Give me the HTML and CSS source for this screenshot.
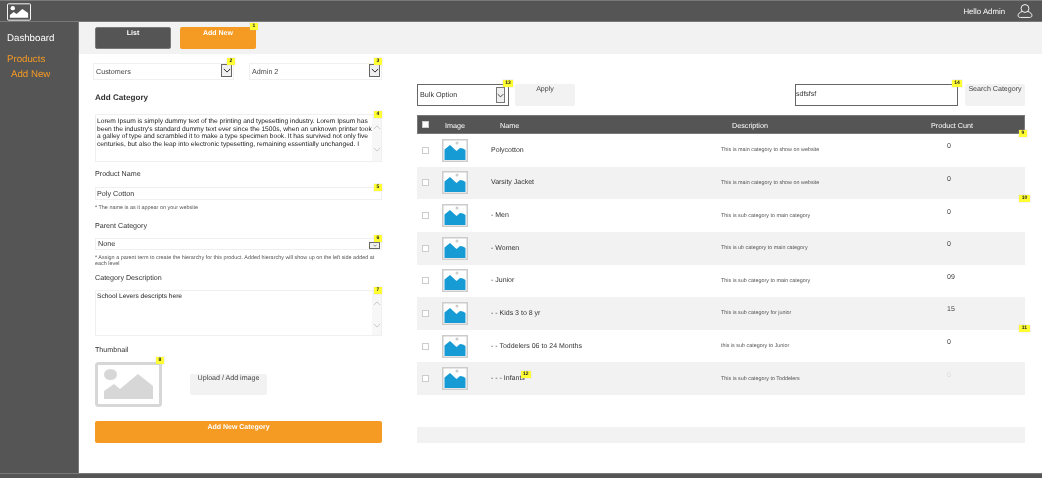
FILE: index.html
```html
<!DOCTYPE html>
<html lang="en">
<head>
    <meta charset="UTF-8">
    <title>Add Category</title>
    <link rel="stylesheet" href="styles.css">
</head>
<body>

    <!-- shared pictures -->
    <svg class="defs" width="0" height="0">
        <symbol id="thumb" viewBox="0 0 26 23">
            <rect x="0.75" y="0.75" width="24.5" height="21.5" fill="#fff" stroke="#ccc" stroke-width="1.5"/>
            <circle cx="15" cy="4" r="1.5" fill="#ccc"/>
            <path d="M2.5 21V10.5L8 6L14.5 12L18 9L21 9.5L23.5 11V21Z" fill="#169bd5"/>
        </symbol>
        <symbol id="chev" viewBox="0 0 10 6">
            <path d="M1 1L5 5L9 1" fill="none" stroke="currentColor" stroke-width="1.2"/>
        </symbol>
    </svg>

    <div class="page">

        <!-- Header -->
        <header class="topbar">
            <svg class="logo" viewBox="0 0 25 18">
                <rect x="0.5" y="0.5" width="24" height="17" rx="1" fill="none" stroke="#fff"/>
                <circle cx="6" cy="5" r="2.3" fill="#fff"/>
                <path d="M3 15V12L7 9L10 11L16 6L22 10V15Z" fill="#fff"/>
            </svg>
            <span class="hello">Hello Admin</span>
            <svg class="user" viewBox="0 0 16 15">
                <ellipse cx="8" cy="4.8" rx="4.2" ry="4.2" fill="none" stroke="#fff"/>
                <path d="M5 8C2 9 .6 10.5 .6 12.3C.6 13.6 1.4 14.4 3 14.4H13C14.6 14.4 15.4 13.6 15.4 12.3C15.4 10.5 14 9 11 8" fill="none" stroke="#fff"/>
            </svg>
        </header>

        <!-- Sidebar -->
        <nav class="sidebar">
            <a class="nav-link">Dashboard</a>
            <a class="nav-link nav-active">Products</a>
            <a class="nav-link nav-active nav-sub">Add New</a>
        </nav>

        <main class="content">

            <div class="subbar">
                <button class="tab tab-dark">List</button>
                <button class="tab tab-orange">Add New<span class="badge badge-1">1</span></button>
            </div>

            <div class="columns">

                <!-- Add category form -->
                <section class="form">
                    <div class="select-row">
                        <div class="field select-top">Customers
                            <span class="drop"><svg><use href="#chev"/></svg></span>
                            <span class="badge badge-2">2</span>
                        </div>
                        <div class="field select-top select-admin">Admin 2
                            <span class="drop"><svg><use href="#chev"/></svg></span>
                            <span class="badge badge-edge badge-3">3</span>
                        </div>
                    </div>

                    <h3 class="form-title">Add Category</h3>

                    <div class="field area area-lorem">
                        <p>Lorem Ipsum is simply dummy text of the printing and typesetting industry. Lorem Ipsum has been the industry's standard dummy text ever since the 1500s, when an unknown printer took a galley of type and scrambled it to make a type specimen book. It has survived not only five centuries, but also the leap into electronic typesetting, remaining essentially unchanged. I</p>
                        <div class="scroll">
                            <svg class="up"><use href="#chev"/></svg>
                            <svg><use href="#chev"/></svg>
                        </div>
                        <span class="badge badge-edge">4</span>
                    </div>

                    <label class="label label-name">Product Name</label>
                    <div class="field input">Poly Cotton<span class="badge badge-edge">5</span></div>
                    <p class="hint">* The name is as it appear on your website</p>

                    <label class="label label-parent">Parent Category</label>
                    <div class="field input input-parent">None
                        <span class="drop drop-small"><svg><use href="#chev"/></svg></span>
                        <span class="badge badge-edge">6</span>
                    </div>
                    <p class="hint">* Assign a parent term to create the hierarchy for this product. Added hierarchy will show up on the left side added at each level</p>

                    <label class="label label-desc">Category Description</label>
                    <div class="field area area-desc">
                        <p>School Levers descripts here</p>
                        <div class="scroll">
                            <svg class="up"><use href="#chev"/></svg>
                            <svg><use href="#chev"/></svg>
                        </div>
                        <span class="badge badge-edge">7</span>
                    </div>

                    <label class="label label-thumb">Thumbnail</label>
                    <div class="thumb-row">
                        <div class="thumb-box">
                            <svg viewBox="0 0 67 45">
                                <rect x="1.5" y="1.5" width="64" height="42" rx="2" fill="#fff" stroke="#d7d7d7" stroke-width="3"/>
                                <ellipse cx="15.5" cy="12.5" rx="6.5" ry="5.5" fill="#d7d7d7"/>
                                <path d="M9 37V29L19 22L25 27L43 12L58 24V37Z" fill="#d7d7d7"/>
                            </svg>
                            <span class="badge badge-8">8</span>
                        </div>
                        <button class="grey-btn upload">Upload / Add image</button>
                    </div>

                    <button class="submit">Add New Category</button>
                </section>

                <!-- Category list -->
                <section class="list">
                    <div class="toolbar">
                        <div class="field bulk">Bulk Option
                            <span class="drop drop-bulk"><svg><use href="#chev"/></svg></span>
                            <span class="badge badge-13">13</span>
                        </div>
                        <button class="grey-btn apply">Apply</button>
                        <div class="field search">sdfsfsf<span class="badge badge-13">14</span></div>
                        <button class="grey-btn find">Search Category</button>
                    </div>

                    <div class="table">
                        <div class="thead">
                            <span class="check check-head"></span>
                            <span>Image</span>
                            <span class="th-name">Name</span>
                            <span class="th-desc">Description</span>
                            <span class="th-count">Product Cunt</span>
                        </div>

                        <div class="row"><span class="check"></span><svg class="pic"><use href="#thumb"/></svg><span class="name">Polycotton</span><span class="desc">This is main category to show on website</span><span class="count">0</span></div>
                        <div class="row"><span class="check"></span><svg class="pic"><use href="#thumb"/></svg><span class="name">Varsity Jacket</span><span class="desc">This is main category to show on website</span><span class="count">0</span></div>
                        <div class="row"><span class="check"></span><svg class="pic"><use href="#thumb"/></svg><span class="name">- Men</span><span class="desc">This is sub category to main category</span><span class="count">0</span></div>
                        <div class="row"><span class="check"></span><svg class="pic"><use href="#thumb"/></svg><span class="name">- Women</span><span class="desc">This is ub category to main category</span><span class="count">0</span></div>
                        <div class="row"><span class="check"></span><svg class="pic"><use href="#thumb"/></svg><span class="name">- Junior</span><span class="desc">This is sub category to main category</span><span class="count">09</span></div>
                        <div class="row"><span class="check"></span><svg class="pic"><use href="#thumb"/></svg><span class="name">- - Kids 3 to 8 yr</span><span class="desc">This is sub category for junior</span><span class="count">15</span></div>
                        <div class="row"><span class="check"></span><svg class="pic"><use href="#thumb"/></svg><span class="name">- - Toddelers 06 to 24 Months</span><span class="desc">this is sub category to Junior</span><span class="count">0</span></div>
                        <div class="row"><span class="check"></span><svg class="pic"><use href="#thumb"/></svg><span class="name">- - - Infants<span class="badge badge-12">12</span></span><span class="desc">This is sub category to Toddelers</span><span class="count count-faint">0</span></div>

                        <span class="badge badge-9">9</span>
                        <span class="badge badge-10">10</span>
                        <span class="badge badge-11">11</span>
                    </div>

                    <div class="pager"></div>
                </section>
            </div>
        </main>

        <footer class="bottombar"></footer>
    </div>

</body>
</html>
```

FILE: styles.css
```css
/* General styles */
body {
    font-family: "Liberation Sans", Arial, sans-serif;
    margin: 0;
    background-color: #fff;
    color: #333;
    overflow: hidden;
    text-rendering: geometricPrecision;
}

p, h3 {
    margin: 0;
}

button {
    font-family: inherit;
    text-rendering: inherit;
    border: none;
    padding: 0;
}

.defs {
    position: absolute;
}

/* Page frame */
.page {
    width: 1042px;
    height: 478px;
    display: grid;
    grid-template-columns: 79px 1fr;
    grid-template-rows: 22px 1fr 5px;
    will-change: transform;
}

.topbar {
    grid-column: 1 / 3;
    display: flex;
    align-items: center;
    background-color: #555;
    border-top: 1px solid #797979;
    border-bottom: 1px solid #797979;
    box-sizing: border-box;
    padding: 0 9px 0 7px;
    color: #fff;
}

.logo {
    width: 24px;
    height: 18px;
    margin-top: 2px;
}

.hello {
    margin-left: auto;
    font-size: 7.8px;
    margin-right: 12px;
}

.user {
    width: 16px;
    height: 14px;
}

.bottombar {
    grid-column: 1 / 3;
    background-color: #555;
    border-top: 1px solid #797979;
}

/* Sidebar */
.sidebar {
    display: flex;
    flex-direction: column;
    background-color: #555;
    border-right: 1px solid #797979;
    padding: 10px 0 0 7px;
}

.nav-link {
    color: #fff;
    font-size: 9.7px;
    line-height: 13px;
}

.nav-active {
    color: #f59a23;
    margin-top: 8px;
}

.nav-sub {
    margin-top: 2px;
    margin-left: 4px;
}

/* Tabs strip */
.subbar {
    height: 32px;
    box-sizing: border-box;
    display: flex;
    gap: 9px;
    padding: 5px 0 0 16px;
    background-color: #f2f2f2;
}

.tab {
    position: relative;
    width: 76px;
    height: 22px;
    border-radius: 2px;
    padding-bottom: 9px;
    font-size: 7px;
    font-weight: bold;
    line-height: 8px;
    color: #fff;
    display: block;
    text-align: center;
    align-self: flex-start;
    box-sizing: border-box;
}

.tab-dark {
    background-color: #555;
    border: 1px solid #797979;
}

.tab-orange {
    background-color: #f59a23;
}

.columns {
    display: flex;
    gap: 35px;
    padding-left: 16px;
}

/* Form */
.form {
    width: 287px;
    display: flex;
    flex-direction: column;
}

.select-row {
    display: flex;
    gap: 15px;
    margin: 9px 0 0 -2px;
}

.field {
    position: relative;
    box-sizing: border-box;
    border: 1px solid #f0f0f0;
    background-color: #fff;
    color: #333;
}

.select-top {
    width: 141px;
    height: 17px;
    line-height: 15px;
    padding-left: 2px;
    font-size: 7.2px;
    color: #444;
}

.select-admin {
    width: 133px;
}

.drop {
    position: absolute;
    right: 1px;
    top: 0;
    width: 11px;
    height: 13px;
    box-sizing: border-box;
    background-color: #f0f0f0;
    border: 1px solid #666;
    color: #222;
    display: flex;
    align-items: center;
    justify-content: center;
}

.drop svg {
    width: 8px;
    height: 5px;
}

.form-title {
    margin-top: 13px;
    font-size: 8.1px;
    line-height: 10px;
    color: #333;
}

.area {
    display: flex;
    justify-content: space-between;
}

.area p {
    font-size: 6.6px;
    line-height: 7.6px;
    color: #222;
    padding: 2px 0 0 1px;
}

.area-lorem {
    height: 48px;
    margin-top: 11px;
}

.area-lorem p {
    width: 275px;
    flex: none;
    font-size: 6.65px;
    padding-top: 3px;
}

.area-desc {
    height: 46px;
    margin-top: 7px;
}

.scroll {
    width: 9px;
    flex: none;
    background-color: #f7f7f7;
    color: #c8c8c8;
    display: flex;
    flex-direction: column;
    gap: 17px;
    padding-top: 10px;
    align-items: center;
}

.scroll svg {
    width: 8px;
    height: 5px;
}

.scroll .up {
    transform: scaleY(-1);
}

.label {
    font-size: 7.15px;
    line-height: 9px;
    color: #333;
}

.label-name {
    margin-top: 8px;
}

.input {
    height: 13px;
    line-height: 11px;
    margin-top: 8px;
    padding-left: 1px;
    font-size: 7.2px;
}

.input-parent {
    height: 12px;
    line-height: 10px;
    padding-left: 2px;
    margin-top: 7px;
}

.drop-small {
    width: 11px;
    height: 7px;
    top: 3px;
    right: 1px;
}

.drop-small svg {
    width: 4px;
    height: 3px;
}

.hint {
    font-size: 5.45px;
    line-height: 6px;
    color: #555;
    margin-top: 5px;
}

.label-parent {
    margin-top: 11px;
}

.label-desc {
    margin-top: 7px;
}

.label-thumb {
    margin-top: 10px;
}

.thumb-row {
    display: flex;
    margin-top: 7px;
}

.thumb-box {
    position: relative;
    width: 67px;
    height: 45px;
}

.thumb-box svg {
    display: block;
    width: 67px;
    height: 45px;
}

.grey-btn {
    background-color: #f2f2f2;
    border-radius: 2px;
    color: #444;
    font-size: 7.1px;
    line-height: 9px;
    padding-bottom: 12px;
    display: block;
    box-sizing: border-box;
    text-align: center;
}

.upload {
    width: 77px;
    height: 21px;
    margin: 12px 0 0 28px;
}

.submit {
    height: 22px;
    margin-top: 14px;
    background-color: #f59a23;
    color: #fff;
    border-radius: 2px;
    font-size: 7px;
    font-weight: bold;
    line-height: 8px;
    padding-bottom: 8px;
    box-sizing: border-box;
}

/* Category list */
.list {
    width: 608px;
}

.toolbar {
    display: flex;
    margin-top: 30px;
    height: 22px;
}

.bulk {
    width: 92px;
    border: 1px solid #666;
    font-size: 7.2px;
    line-height: 20px;
    padding-left: 2px;
}

.drop-bulk {
    top: 2px;
    right: 3px;
    width: 9px;
    height: 16px;
    border-width: 1px;
    border-color: #777;
}

.apply {
    width: 60px;
    margin-left: 6px;
}

.search {
    width: 163px;
    margin-left: 220px;
    border: 1px solid #666;
    font-size: 7px;
    line-height: 20px;
}

.find {
    width: 60px;
    margin-left: 7px;
}

.table {
    position: relative;
    margin-top: 9px;
}

.thead {
    display: grid;
    grid-template-columns: 23px 55px 222px 200px 1fr;
    align-items: center;
    height: 19px;
    box-sizing: border-box;
    background-color: #555;
    border: 1px solid #797979;
    color: #fff;
    font-size: 7.2px;
    padding: 1px 0 0 4px;
}

.th-desc {
    padding-left: 10px;
}

.th-count {
    padding-left: 9px;
}

.check {
    display: block;
    width: 7px;
    height: 7px;
    box-sizing: border-box;
    background-color: #fff;
    border: 1px solid #ccc;
}

.check-head {
    margin-top: -2px;
}

.row {
    display: grid;
    grid-template-columns: 20px 49px 230px 226px 1fr;
    align-items: center;
    height: 32.625px;
    padding-left: 5px;
    box-sizing: border-box;
}

.row:nth-of-type(odd) {
    background-color: #f2f2f2;
}

.pic {
    width: 26px;
    height: 23px;
}

.name {
    position: relative;
    width: max-content;
    font-size: 7px;
    color: #333;
}

.desc {
    font-size: 5.4px;
    color: #555;
}

.count {
    font-size: 7px;
    padding-left: 0;
    margin-top: -7px;
    color: #444;
}

.count-faint {
    color: #ddd;
}

.pager {
    height: 16px;
    margin-top: 32px;
    background-color: #f2f2f2;
}

/* Numbered markers that sit on top of the wireframe */
.badge {
    position: absolute;
    display: block;
    min-width: 8px;
    height: 7px;
    padding: 0 1px;
    box-sizing: border-box;
    background-color: #ffff33;
    box-shadow: 0 0 1px #bbb;
    color: #222;
    font-size: 5px;
    font-weight: bold;
    line-height: 7px;
    text-align: center;
}

.badge-1 {
    top: -4px;
    right: -2px;
}

.badge-2 {
    top: -6px;
    right: -2px;
}

.badge-3 {
    top: -6px;
}

.badge-edge {
    right: -1px;
}

.area .badge-edge,
.input .badge-edge {
    top: -4px;
}

.badge-8 {
    top: -5px;
    right: -2px;
}

.badge-9 {
    top: 15px;
    right: -2px;
}

.badge-10 {
    top: 80px;
    right: -5px;
    min-width: 11px;
}

.badge-11 {
    top: 210px;
    right: -5px;
    min-width: 11px;
}

.badge-12 {
    top: -4px;
    right: -6px;
    min-width: 10px;
}

.badge-13 {
    top: -5px;
    right: -5px;
    min-width: 10px;
}
```
